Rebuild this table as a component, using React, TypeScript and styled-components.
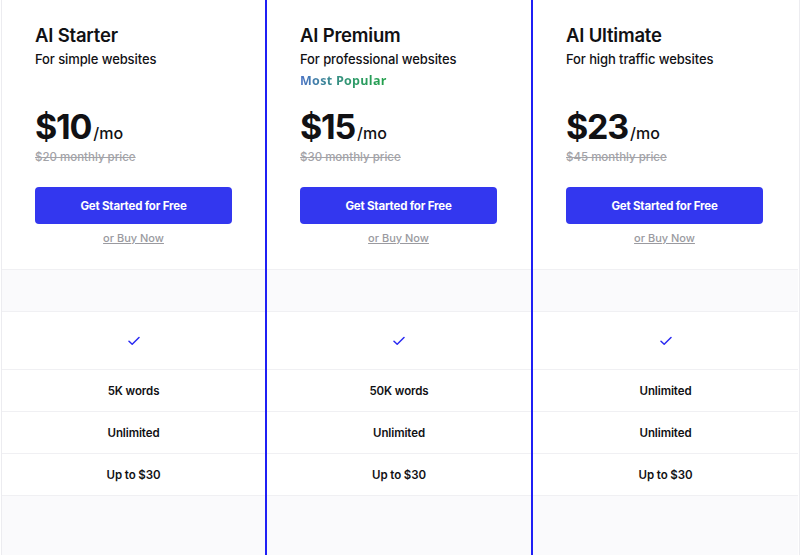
import React from "react";
import styled, { createGlobalStyle } from "styled-components";

const Global = createGlobalStyle`
  html, body { margin: 0; padding: 0; background: #ffffff; }
  body { font-family: Inter, "Noto Sans", sans-serif; color: #111114; }
`;

const Table = styled.div`
  display: grid;
  grid-template-columns: 263px 268px 265px;
  width: 797px;
  margin-left: 1px;
  border-left: 1px solid #ececf0;
  border-right: 1px solid #ececf0;
  height: 555px;
  overflow: hidden;
`;

const Column = styled.div<{ $featured?: boolean }>`
  display: flex;
  flex-direction: column;
  border-left: ${(p) => (p.$featured ? "2px solid #1f1ff5" : "none")};
  border-right: ${(p) => (p.$featured ? "2px solid #1f1ff5" : "none")};
`;

const Header = styled.div`
  box-sizing: border-box;
  height: 270px;
  padding: 23px 32px 0 33px;
  border-bottom: 1px solid #f0f0f3;
  display: flex;
  flex-direction: column;
`;

const Title = styled.h2`
  margin: 0;
  font-size: 18.5px;
  font-weight: 600;
  line-height: 24px;
  letter-spacing: -0.2px;
`;

const Subtitle = styled.p`
  margin: 4px 0 0;
  font-size: 13px;
  font-weight: 500;
  line-height: 16px;
  letter-spacing: -0.1px;
`;

const Badge = styled.div`
  margin-top: 6px;
  font-family: "Open Sans", sans-serif;
  font-size: 12.5px;
  font-weight: 700;
  line-height: 16px;
  letter-spacing: 0.3px;
  background: linear-gradient(90deg, #4a72c4 0%, #2f9a6a 60%, #22a04a 100%);
  -webkit-background-clip: text;
  background-clip: text;
  color: transparent;
  align-self: flex-start;
`;

const PriceRow = styled.div<{ $shift: boolean }>`
  display: flex;
  align-items: baseline;
  margin-top: ${(p) => (p.$shift ? "16px" : "38px")};
`;

const Amount = styled.span`
  font-size: 34px;
  font-weight: 700;
  line-height: 44px;
  letter-spacing: -1.2px;
`;

const Per = styled.span`
  font-size: 16px;
  font-weight: 500;
  margin-left: 2px;
`;

const OldPrice = styled.div`
  margin-top: 0;
  font-size: 11.5px;
  font-weight: 500;
  color: #a3a3a8;
  text-decoration: line-through;
  line-height: 16px;
`;

const CTA = styled.button`
  margin-top: 22px;
  width: 197px;
  height: 37px;
  border: none;
  border-radius: 4px;
  background: #3337ef;
  color: #ffffff;
  font-family: Inter, sans-serif;
  font-size: 11.5px;
  font-weight: 700;
  letter-spacing: -0.2px;
  cursor: pointer;
`;

const BuyNow = styled.a`
  margin-top: 7px;
  width: 197px;
  text-align: center;
  font-size: 11px;
  font-weight: 500;
  color: #9a9aa0;
  text-decoration: underline;
  line-height: 14px;
`;

const Cell = styled.div<{ $h: number; $shade?: boolean }>`
  height: ${(p) => p.$h}px;
  box-sizing: border-box;
  display: flex;
  align-items: center;
  justify-content: center;
  border-bottom: 1px solid #f0f0f3;
  background: ${(p) => (p.$shade ? "#fafafc" : "#ffffff")};
  font-size: 11.5px;
  font-weight: 600;
  letter-spacing: -0.1px;
`;

const Filler = styled.div`
  flex: 1;
  background: #fafafc;
`;

const Check = () => (
  <svg width="12" height="10" viewBox="0 0 12 10" fill="none">
    <path d="M1 5.2 L4.2 8.2 L11 1.5" stroke="#2a2af2" strokeWidth="1.5" strokeLinecap="round" strokeLinejoin="round" />
  </svg>
);

type Plan = {
  name: string;
  tagline: string;
  popular?: boolean;
  price: string;
  old: string;
  words: string;
};

const plans: Plan[] = [
  { name: "AI Starter", tagline: "For simple websites", price: "$10", old: "$20 monthly price", words: "5K words" },
  { name: "AI Premium", tagline: "For professional websites", popular: true, price: "$15", old: "$30 monthly price", words: "50K words" },
  { name: "AI Ultimate", tagline: "For high traffic websites", price: "$23", old: "$45 monthly price", words: "Unlimited" },
];

export default function App() {
  return (
    <>
      <Global />
      <Table>
        {plans.map((p) => (
          <Column key={p.name} $featured={p.popular}>
            <Header>
              <Title>{p.name}</Title>
              <Subtitle>{p.tagline}</Subtitle>
              {p.popular && <Badge>Most Popular</Badge>}
              <PriceRow $shift={!!p.popular}>
                <Amount>{p.price}</Amount>
                <Per>/mo</Per>
              </PriceRow>
              <OldPrice>{p.old}</OldPrice>
              <CTA>Get Started for Free</CTA>
              <BuyNow>or Buy Now</BuyNow>
            </Header>
            <Cell $h={42} $shade />
            <Cell $h={58}>
              <Check />
            </Cell>
            <Cell $h={42}>{p.words}</Cell>
            <Cell $h={42}>Unlimited</Cell>
            <Cell $h={42}>Up to $30</Cell>
            <Filler />
          </Column>
        ))}
      </Table>
    </>
  );
}
